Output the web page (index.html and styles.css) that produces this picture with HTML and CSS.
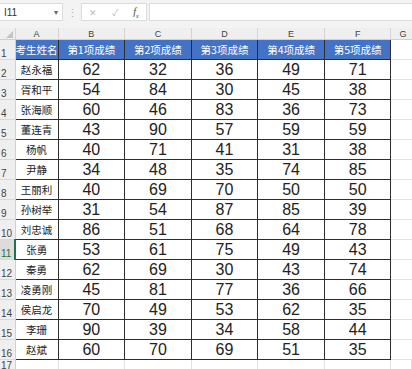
FILE: index.html
```html
<!DOCTYPE html>
<html>
<head>
  <meta charset="utf-8">
  <title>成绩表</title>
  <link rel="stylesheet" href="styles.css">
</head>
<body>
  <div class="toolbar">
    <div class="name-box">I11<span class="caret">▾</span></div>
    <div class="grip">⋮</div>
    <div class="fx-group">
      <span class="fx-btn">✕</span>
      <span class="fx-btn">✓</span>
      <span class="fx-btn fx">f<sub>x</sub></span>
    </div>
    <div class="formula-input"></div>
  </div>

  <table class="sheet">
    <colgroup>
      <col class="c-row"><col class="c-a"><col class="c-n"><col class="c-n"><col class="c-n"><col class="c-n"><col class="c-n"><col class="c-g">
    </colgroup>
    <thead>
      <tr class="col-heads">
        <th class="corner"><span class="tri"></span></th>
        <th>A</th><th>B</th><th>C</th><th>D</th><th>E</th><th>F</th><th class="g">G</th>
      </tr>
    </thead>
    <tbody id="body">
      <tr class="title">
        <th class="rh">1</th>
        <td>考生姓名</td><td>第1项成绩</td><td>第2项成绩</td><td>第3项成绩</td><td>第4项成绩</td><td>第5项成绩</td><td class="g"></td>
      </tr>
    </tbody>
  </table>

  <script src="app.js"></script>
</body>
</html>
```

FILE: styles.css
```css
body {
  margin: 0;
  width: 412px;
  height: 369px;
  overflow: hidden;
  background: #fff;
  font-family: "Noto Sans CJK SC", sans-serif;
}

.toolbar {
  display: flex;
  align-items: center;
  height: 28px;
  padding-top: 0;
  background: #f3f3f3;
  box-sizing: border-box;
  padding-bottom: 4px;
}

.name-box {
  display: flex;
  align-items: center;
  justify-content: space-between;
  width: 63px;
  height: 18px;
  padding: 0 4px 0 4px;
  box-sizing: border-box;
  background: #fff;
  border: 1px solid #dcdcdc;
  border-left: none;
  font-family: "Liberation Sans", sans-serif;
  font-size: 10px;
  color: #333;
}

.caret {
  font-size: 8px;
  color: #666;
}

.grip {
  width: 18px;
  text-align: center;
  color: #aaa;
  font-size: 11px;
}

.fx-group {
  display: flex;
  align-items: center;
  justify-content: space-around;
  width: 66px;
  height: 18px;
  background: #fff;
  border: 1px solid #dcdcdc;
  box-sizing: border-box;
  color: #bbb;
  font-size: 9px;
}

.fx-group .fx {
  color: #444;
  font-family: "Liberation Serif", serif;
  font-style: italic;
  font-size: 10px;
}

.fx sub {
  font-size: 6px;
}

.formula-input {
  flex: 1;
  height: 18px;
  margin-left: 2px;
  background: #fff;
  border: 1px solid #dcdcdc;
  border-right: none;
  box-sizing: border-box;
}

.sheet {
  border-collapse: collapse;
  table-layout: fixed;
  width: 412px;
}

.c-row { width: 15px; }
.c-a { width: 43px; }
.c-n { width: 66.6px; }
.c-g { width: 21px; }

.col-heads th {
  height: 11px;
  padding: 0;
  background: #efefef;
  border-right: 1px solid #d4d4d4;
  border-bottom: 1px solid #cfcfcf;
  font-family: "Liberation Sans", sans-serif;
  font-weight: normal;
  font-size: 9px;
  line-height: 10px;
  color: #444;
}

.col-heads .corner {
  position: relative;
}

.tri {
  position: absolute;
  right: 2px;
  bottom: 1px;
  border-left: 7px solid transparent;
  border-bottom: 7px solid #c3c3c3;
}

.col-heads .g {
  border-right: none;
  text-align: left;
  padding-left: 8px;
}

.rh {
  padding: 0 0 0 1px;
  background: #efefef;
  border-right: 1px solid #d0d0d0;
  border-bottom: 1px solid #d8d8d8;
  font-family: "Liberation Sans", sans-serif;
  font-weight: normal;
  font-size: 10px;
  color: #444;
  text-align: left;
  vertical-align: bottom;
}

.rh.active {
  background: #dcdcdc;
  color: #217346;
  border-right: 2px solid #217346;
}

tbody tr {
  height: 20px;
}

tbody td {
  padding: 0;
  border: 1px solid #2e2e2e;
  text-align: center;
  color: #222;
}

.title td {
  background: #4472c4;
  color: #fff;
  font-size: 10.5px;
}

td.name {
  font-size: 10.5px;
}

td.num {
  font-family: "Liberation Sans", sans-serif;
  font-size: 16px;
}

tbody td.g {
  border: none;
  border-left: 1px solid #2e2e2e;
  border-bottom: 1px solid #e2e2e2;
  background: #fff;
}

tr.tail {
  height: 10px;
}

tr.tail td {
  border: none;
  border-right: 1px solid #e2e2e2;
}
```

FILE: app.js
```js
var rows = [
  ['赵永福', 62, 32, 36, 49, 71],
  ['胥和平', 54, 84, 30, 45, 38],
  ['张海顺', 60, 46, 83, 36, 73],
  ['董连青', 43, 90, 57, 59, 59],
  ['杨帆', 40, 71, 41, 31, 38],
  ['尹静', 34, 48, 35, 74, 85],
  ['王丽利', 40, 69, 70, 50, 50],
  ['孙树举', 31, 54, 87, 85, 39],
  ['刘忠诚', 86, 51, 68, 64, 78],
  ['张勇', 53, 61, 75, 49, 43],
  ['秦勇', 62, 69, 30, 43, 74],
  ['凌勇刚', 45, 81, 77, 36, 66],
  ['侯启龙', 70, 49, 53, 62, 35],
  ['李珊', 90, 39, 34, 58, 44],
  ['赵斌', 60, 70, 69, 51, 35]
];

var body = document.getElementById('body');

rows.forEach(function (r, i) {
  var tr = document.createElement('tr');
  var n = i + 2;
  var html = '<th class="rh' + (n === 11 ? ' active' : '') + '">' + n + '</th>';
  html += '<td class="name">' + r[0] + '</td>';
  for (var k = 1; k < r.length; k++) {
    html += '<td class="num">' + r[k] + '</td>';
  }
  html += '<td class="g"></td>';
  tr.innerHTML = html;
  body.appendChild(tr);
});

var tail = document.createElement('tr');
tail.className = 'tail';
tail.innerHTML = '<th class="rh">17</th><td></td><td></td><td></td><td></td><td></td><td></td><td></td>';
body.appendChild(tail);
```
